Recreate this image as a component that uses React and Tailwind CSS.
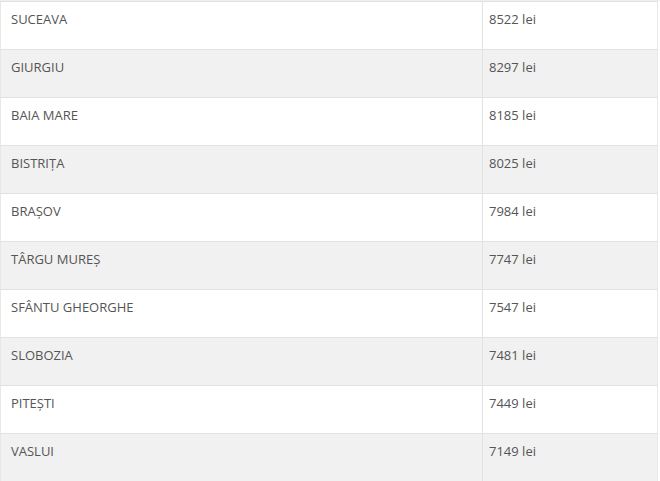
import React from 'react';

const rows = [
  ['SUCEAVA', '8522 lei'],
  ['GIURGIU', '8297 lei'],
  ['BAIA MARE', '8185 lei'],
  ['BISTRIȚA', '8025 lei'],
  ['BRAȘOV', '7984 lei'],
  ['TÂRGU MUREȘ', '7747 lei'],
  ['SFÂNTU GHEORGHE', '7547 lei'],
  ['SLOBOZIA', '7481 lei'],
  ['PITEȘTI', '7449 lei'],
  ['VASLUI', '7149 lei'],
];

export default function App() {
  return (
    <div className="w-[660px] h-[481px] overflow-hidden bg-white font-['Open_Sans',sans-serif] text-[13px] text-[#555]">
      <div className="h-[1px] bg-[#eeeeee]" />
      <table className="w-[658px] border-collapse border-l border-r border-[#e8e8e8]">
        <tbody>
          {rows.map(([city, salary], i) => (
            <tr
              key={city}
              className={`h-[48px] border-t border-[#e2e2e2] ${i % 2 === 1 ? 'bg-[#f1f1f1]' : 'bg-white'}`}
            >
              <td className="align-top pl-[10px] pt-[8px] leading-[18px]">{city}</td>
              <td className="align-top w-[175px] border-l border-[#e2e2e2] pl-[6px] pt-[8px] leading-[18px]">{salary}</td>
            </tr>
          ))}
        </tbody>
      </table>
    </div>
  );
}
